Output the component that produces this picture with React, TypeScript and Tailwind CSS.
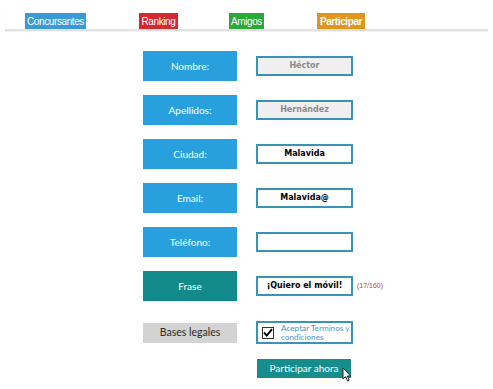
import React from "react";

const tabs = [
  { label: "Concursantes", cls: "bg-[#3b9ad6] w-[61px]", gap: "ml-[20px]" },
  { label: "Ranking", cls: "bg-[#d42a2f] w-[39px]", gap: "ml-[53px]" },
  { label: "Amigos", cls: "bg-[#2aa838] w-[35px]", gap: "ml-[51px]" },
  { label: "Participar", cls: "bg-[#e0961c] w-[48px] font-bold", gap: "ml-[53px]" },
];

type Row = { label: string; value: string; filled?: boolean; teal?: boolean; counter?: string };

const rows: Row[] = [
  { label: "Nombre:", value: "Héctor", filled: true },
  { label: "Apellidos:", value: "Hernández", filled: true },
  { label: "Ciudad:", value: "Malavida" },
  { label: "Email:", value: "Malavida@" },
  { label: "Teléfono:", value: "" },
  { label: "Frase", value: "¡Quiero el móvil!", teal: true, counter: "(17/160)" },
];

function Cursor() {
  return (
    <svg
      className="absolute left-[342px] top-[367px]"
      width="10"
      height="15"
      viewBox="0 0 10 15"
    >
      <path
        d="M1 1 L1 12 L3.6 9.6 L5.6 14 L7.2 13.3 L5.3 9 L8.8 9 Z"
        fill="#fff"
        stroke="#222"
        strokeWidth="1"
        strokeLinejoin="round"
      />
    </svg>
  );
}

export default function App() {
  return (
    <div className="relative h-[389px] w-[493px] overflow-hidden bg-white font-['Lato',sans-serif]">
      <div className="mx-[5px] flex items-end border-b-2 border-[#e2e2e2] pt-[13px] shadow-[0_1px_1px_rgba(0,0,0,0.05)]">
        {tabs.map((t) => (
          <div
            key={t.label}
            className={`${t.gap} ${t.cls} flex h-[16px] items-center justify-center whitespace-nowrap font-['Liberation_Sans',Arial,sans-serif] text-[10px] tracking-[-0.4px] text-white`}
          >
            {t.label}
          </div>
        ))}
      </div>

      <div className="ml-[143px] mt-[20px] flex flex-col gap-[14px]">
        {rows.map((r) => (
          <div key={r.label} className="flex items-center">
            <div
              className={`flex h-[30px] w-[94px] items-center justify-center text-[10px] text-white ${
                r.teal ? "bg-[#128a8a]" : "bg-[#27a0dd]"
              }`}
            >
              {r.label}
            </div>
            <div
              className={`ml-[19px] flex h-[20px] w-[97px] items-center justify-center border-2 border-[#3a93b5] font-['DejaVu_Sans',sans-serif] text-[8px] font-bold ${
                r.filled ? "bg-[#efefef] text-[#8a8a8a]" : "bg-white text-black"
              }`}
            >
              {r.value}
            </div>
            {r.counter ? (
              <span className="ml-[4px] font-['Liberation_Sans',Arial,sans-serif] text-[7px] text-[#d33a3a]">
                {r.counter}
              </span>
            ) : null}
          </div>
        ))}

        <div className="mt-[6px] flex items-center">
          <div className="flex h-[20px] w-[94px] items-center justify-center bg-[#d3d3d3] text-[10.5px] text-[#2a2a2a]">
            Bases legales
          </div>
          <div className="ml-[19px] flex h-[23px] w-[97px] items-center border-2 border-[#3a93b5] bg-white pl-[4px]">
            <div className="flex h-[12px] w-[12px] shrink-0 items-center justify-center border border-[#333] bg-white">
              <svg width="10" height="9" viewBox="0 0 10 9">
                <path d="M1 4.5 L3.8 7.5 L9 1.2" fill="none" stroke="#000" strokeWidth="1.9" />
              </svg>
            </div>
            <span className="ml-[7px] whitespace-nowrap text-[8.2px] leading-[9px] text-[#4b95cc]">
              Aceptar Terminos y
              <br />
              condiciones
            </span>
          </div>
        </div>

        <div className="ml-[114px] mt-[1px] flex h-[19px] w-[94px] items-center justify-center bg-[#178c8c] text-[10px] text-white">
          Participar ahora
        </div>
      </div>

      <Cursor />
    </div>
  );
}
